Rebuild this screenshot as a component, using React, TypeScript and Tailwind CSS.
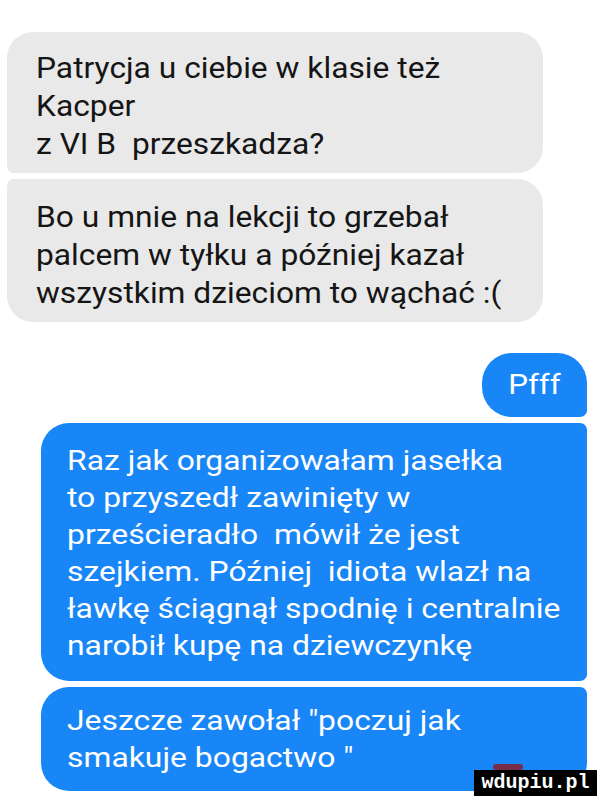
const grey = 'bg-[#e9e9e9] text-[#151515] text-[29px] leading-[38px] pl-[29px] pr-4 pb-[10px] w-[536px]';
const blue = 'bg-[#1886f7] text-white text-[27px] leading-[37px] pl-[26px] pr-4 w-[546px]';

export default function App() {
  return (
    <div className="w-[600px] h-[800px] bg-white overflow-hidden relative" style={{ fontFamily: 'Roboto, "Noto Sans", sans-serif' }}>
      <div className="flex flex-col pt-8">
        {/* received */}
        <div className="flex flex-col gap-[6px] ml-[7px]">
          <div className={`${grey} pt-[17px] rounded-[26px] rounded-bl-[7px]`}>
            <div className="origin-left scale-x-[1.095] whitespace-nowrap">
              Patrycja u ciebie w klasie też
              <br />
              Kacper
              <br />
              z VI B&nbsp; przeszkadza?
            </div>
          </div>
          <div className={`${grey} pt-[19px] rounded-[26px] rounded-tl-[7px]`}>
            <div className="origin-left scale-x-[1.095] whitespace-nowrap">
              Bo u mnie na lekcji to grzebał
              <br />
              palcem w tyłku a później kazał
              <br />
              wszystkim dzieciom to wąchać :(
            </div>
          </div>
        </div>

        {/* sent */}
        <div className="flex flex-col items-end gap-[6px] mr-[13px] mt-[31px]">
          <div className="bg-[#1886f7] text-white text-[28px] h-[64px] w-[105px] flex items-center justify-center rounded-[30px] rounded-br-[7px]">
            <span className="scale-x-[1.12]">Pfff</span>
          </div>
          <div className={`${blue} pt-[20px] pb-[16px] rounded-[28px] rounded-tr-[7px] rounded-br-[7px]`}>
            <div className="origin-left scale-x-[1.18] whitespace-nowrap">
              Raz jak organizowałam jasełka
              <br />
              to przyszedł zawinięty w
              <br />
              prześcieradło&nbsp; mówił że jest
              <br />
              szejkiem. Później&nbsp; idiota wlazł na
              <br />
              ławkę ściągnął spodnię i centralnie
              <br />
              narobił kupę na dziewczynkę
            </div>
          </div>
          <div className={`${blue} pt-[16px] pb-[14px] rounded-[28px] rounded-tr-[7px]`}>
            <div className="origin-left scale-x-[1.18] whitespace-nowrap">
              Jeszcze zawołał "poczuj jak
              <br />
              smakuje bogactwo "
            </div>
          </div>
        </div>
      </div>

      {/* watermark */}
      <div className="absolute left-[493px] top-[764px] w-[30px] h-[6px] bg-[#7a2b4a] rounded-sm" />
      <div className="absolute left-[474px] top-[770px] w-[123px] h-[26px] bg-black text-white flex items-center justify-center text-[20px] font-bold leading-none" style={{ fontFamily: '"Liberation Mono", monospace' }}>
        wdupiu.pl
      </div>
    </div>
  );
}
